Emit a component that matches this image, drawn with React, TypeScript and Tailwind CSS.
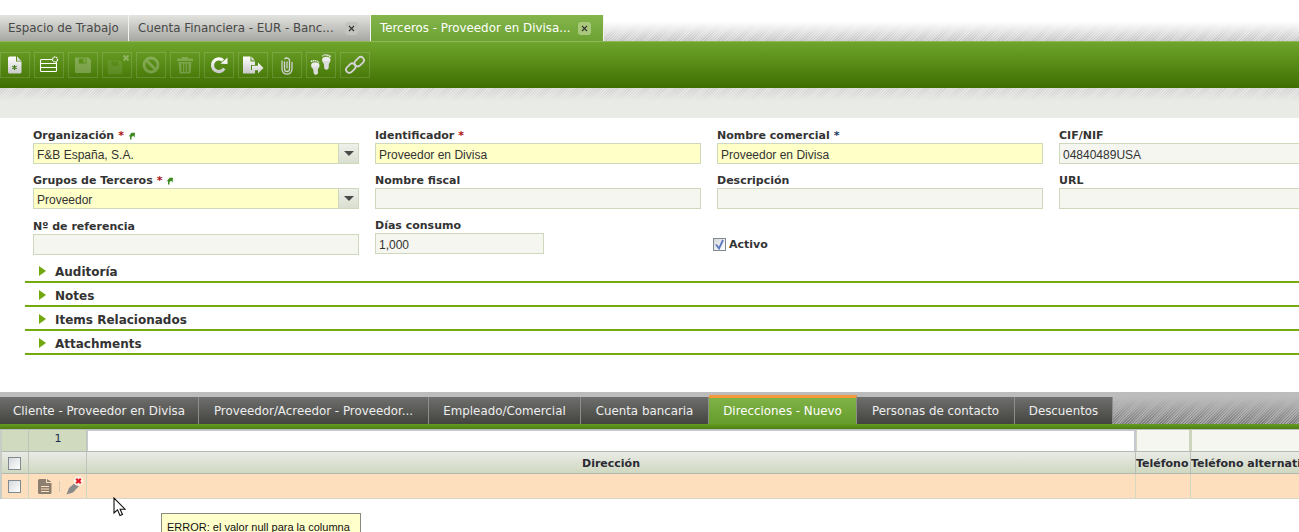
import React from 'react';

const SANS = 'font-["DejaVu_Sans",sans-serif]';
const W = 'url(#iconWhite)';

const IconNew = () => (
  <svg width="20" height="20" viewBox="0 0 20 20">
    <path d="M4.500 1.500H11v5h5.500V17a1.500 1.500 0 0 1-1.500 1.500H4.500A1.500 1.500 0 0 1 3 17V3a1.500 1.500 0 0 1 1.500-1.500z" fill={W} />
    <path d="M12 1.500l4.500 4.500H12z" fill={W} />
    <path d="M9.500 10v5M7.300 11.300l4.400 2.400M11.700 11.300l-4.400 2.400" stroke="#3f7a10" strokeWidth="1.100" />
  </svg>
);

const IconGrid = () => (
  <svg width="20" height="20" viewBox="0 0 20 20" fill="none">
    <rect x="1.500" y="4.500" width="16" height="12" rx="1" stroke="#fff" strokeWidth="1.100" />
    <path d="M1.500 8.500h16M1.500 12.500h16" stroke="#fff" strokeWidth="1.100" />
    <circle cx="16" cy="4.500" r="2.500" fill="#5c8f22" stroke="#fff" strokeWidth="1.300" strokeDasharray="1.400 0.700" />
  </svg>
);

const IconSave = () => (
  <svg width="20" height="20" viewBox="0 0 20 20" opacity="0.24">
    <path fillRule="evenodd" d="M2 2.500h13.500L18 5v11.500a1.500 1.500 0 0 1-1.500 1.500h-13A1.500 1.500 0 0 1 2 16.500zM6 3.500v5h7.500v-5zM10.500 4h2v3.500h-2z" fill="#fff" />
  </svg>
);

const IconSaveClose = () => (
  <svg width="26" height="22" viewBox="0 0 26 22">
    <g transform="translate(2 4) scale(0.9)" opacity="0.09">
      <path fillRule="evenodd" d="M2 2.500h13.500L18 5v11.500a1.500 1.500 0 0 1-1.500 1.500h-13A1.500 1.500 0 0 1 2 16.500zM6 3.500v5h7.500v-5z" fill="#fff" />
    </g>
    <path d="M19.500 1.500l5 5M24.500 1.500l-5 5" stroke="#fff" strokeOpacity="0.3" strokeWidth="2" />
  </svg>
);

const IconNo = () => (
  <svg width="20" height="20" viewBox="0 0 20 20" fill="none" opacity="0.24">
    <circle cx="10" cy="10" r="7" stroke="#fff" strokeWidth="2.800" />
    <path d="M5.500 5.500l9 9" stroke="#fff" strokeWidth="2.800" />
  </svg>
);

const IconTrash = () => (
  <svg width="20" height="20" viewBox="0 0 20 20" opacity="0.22">
    <path fillRule="evenodd" d="M2 3.500h5V2h6v1.500h5V6H2zM3.500 7h13l-1 11.500h-11zM6.500 8.500v8.500h1.500V8.500zM9.300 8.500v8.500h1.400V8.500zM12 8.500v8.500h1.500V8.500z" fill="#fff" />
  </svg>
);

const IconRefresh = () => (
  <svg width="20" height="20" viewBox="0 0 20 20" fill="none">
    <path d="M15.200 13.500A6.300 6.300 0 1 1 14 5.500" stroke={W} strokeWidth="3.200" />
    <path d="M11.500 8.800L18.500 9V2.500z" fill="#f4f4f4" />
  </svg>
);

const IconExport = () => (
  <svg width="24" height="20" viewBox="0 0 24 20">
    <path d="M2 1.500h7.500v5H14v3.500H10v5h4V18.500H2z" fill={W} />
    <path d="M10.500 1.500L14 5.500h-3.500z" fill={W} />
    <path d="M11 10.800h6V7.500l5.500 5.500-5.500 5.500v-3.300h-6z" fill={W} />
  </svg>
);

const IconClip = () => (
  <svg width="20" height="20" viewBox="0 0 20 20" fill="none">
    <path d="M7.500 6.500v7.500a2.500 2.500 0 0 0 5 0V4.800a3.300 3.300 0 0 0-3-1.800 2.800 2.800 0 0 0-2 1" stroke="#d8d8d8" strokeWidth="1.300" />
    <path d="M5 5.500v8.800a5 4.800 0 0 0 10 0V7M10 6.500v7" stroke="#cfcfcf" strokeWidth="1.300" />
  </svg>
);

const IconFeet = () => (
  <svg width="24" height="24" viewBox="0 0 24 24" className="shrink-0">
    <g fill="#ececec">
      <ellipse cx="6.300" cy="12.500" rx="4.200" ry="3.300" />
      <path d="M3 13.500h6.800l-1 3.500.3 3a2.300 2.300 0 0 1-4.400 .3L4.300 17z" fill="#dcdcdc" />
      <circle cx="2.600" cy="8.200" r="1" /><circle cx="4.700" cy="7.700" r=".9" /><circle cx="6.700" cy="7.800" r=".8" /><circle cx="8.400" cy="8.300" r=".7" /><circle cx="9.700" cy="9.200" r=".6" />
      <ellipse cx="17.300" cy="7" rx="4.200" ry="3.300" />
      <path d="M13.500 8h7.500l-1.200 3.500-.1 3.300a2.300 2.300 0 0 1-4.500 .1l-.2-3.400z" fill="#dcdcdc" />
      <circle cx="13.500" cy="2.900" r=".7" /><circle cx="15.100" cy="2.100" r=".8" /><circle cx="17" cy="1.900" r=".8" /><circle cx="18.900" cy="2.300" r=".9" /><circle cx="20.800" cy="3.200" r="1" />
    </g>
  </svg>
);

const IconLink = () => (
  <svg width="22" height="22" viewBox="0 0 22 22" fill="none" stroke="#d4d4d4" strokeWidth="1.800">
    <rect x="1.500" y="11" width="10.500" height="6.500" rx="3.200" transform="rotate(-45 6.700 14.200)" />
    <rect x="10" y="4.500" width="10.500" height="6.500" rx="3.200" transform="rotate(-45 15.200 7.700)" />
  </svg>
);

const toolbar = [
  <IconNew />, <IconGrid />, <IconSave />, <IconSaveClose />, <IconNo />, <IconTrash />,
  <IconRefresh />, <IconExport />, <IconClip />, <IconFeet />, <IconLink />,
];

const CloseBadge = ({ active }: { active?: boolean }) => (
  <span className={`ml-auto w-[13px] h-[13px] rounded-[3px] flex items-center justify-center ${active ? 'bg-[#a9c87c]' : 'bg-[#c3c4bf]'}`}>
    <svg width="7" height="7" viewBox="0 0 7 7"><path d="M1 1l5 5M6 1l-5 5" stroke="#333" strokeWidth="1.100" /></svg>
  </span>
);

const TopTab = ({ text, w, active, close }: { text: string; w: string; active?: boolean; close?: boolean }) => (
  <div className={`${w} h-full shrink-0 flex items-center pt-[1px] ${close ? 'pl-[9px]' : 'pl-[8px]'} pr-[12px] border-r border-[#f2f2f2] text-[11.85px] whitespace-nowrap ${active ? 'text-white bg-[linear-gradient(to_bottom,#84b54c,#6da233)]' : 'text-[#484848] bg-[linear-gradient(to_bottom,#e3e4df,#a6a7a2)]'}`}>
    <span>{text}</span>
    {close && <CloseBadge active={active} />}
  </div>
);

const GreenArrow = () => (
  <svg width="8" height="8" viewBox="0 0 7 8" className="ml-[4px] inline-block">
    <path d="M1.500 7.500V4L0 4.800 3 .8h3.500l-.5 5-1.300-2L3 5v2.500z" fill="#3c8a1e" />
  </svg>
);

const Field = ({ label, star, arrow, value, req, combo, width, dark }: {
  label: string; star?: boolean; arrow?: boolean; value?: string; req?: boolean; combo?: boolean; width?: string; dark?: boolean;
}) => (
  <div>
    <div className="h-[16px] pt-[2px] flex items-center text-[11px] font-bold text-[#333] whitespace-nowrap">
      {label}
      {star && <span className={`ml-[4px] ${dark ? 'text-[#1d3b5c]' : 'text-[#a11]'}`}>*</span>}
      {arrow && <GreenArrow />}
    </div>
    <div className={`${width ?? 'w-full'} h-[21px] flex border border-[#cdd8bd] ${req ? 'bg-[#ffffc8]' : 'bg-[#f4f6ef]'}`}>
      <input readOnly value={value ?? ''} className='flex-1 min-w-0 px-[3px] pt-[2px] bg-transparent outline-none text-[12px] text-[#333] font-["Liberation_Sans",sans-serif]' />
      {combo && (
        <span className="w-[20px] h-full border-l border-[#cdd8bd] bg-[linear-gradient(to_bottom,#eef0ea,#d9dfd0)] flex items-center justify-center">
          <svg width="10" height="5" viewBox="0 0 10 5"><path d="M0 0h10L5 5z" fill="#4a4a4a" /></svg>
        </span>
      )}
    </div>
  </div>
);

const Section = ({ title }: { title: string }) => (
  <div className="h-[24px] ml-[25px] pt-[3px] border-b-2 border-[#74a80f] flex items-center pl-[14px] text-[12px] font-bold text-[#333]">
    <svg width="7" height="10" viewBox="0 0 7 10" className="mr-[9px] -mt-[2px]"><path d="M0 0l7 5-7 5z" fill="#74a80f" /></svg>
    {title}
  </div>
);

const bottomTabs = [
  { text: 'Cliente - Proveedor en Divisa', w: 'w-[199px]' },
  { text: 'Proveedor/Acreedor - Proveedor...', w: 'w-[230px]' },
  { text: 'Empleado/Comercial', w: 'w-[152px]' },
  { text: 'Cuenta bancaria', w: 'w-[128px]' },
  { text: 'Direcciones - Nuevo', w: 'w-[148px]', active: true },
  { text: 'Personas de contacto', w: 'w-[158px]' },
  { text: 'Descuentos', w: 'w-[98px]' },
];

const Check = ({ checked }: { checked?: boolean }) => (
  <span className="w-[13px] h-[13px] border border-[#808890] bg-[linear-gradient(135deg,#d5d8dc,#ffffff)] flex items-center justify-center shrink-0">
    {checked && <svg width="9" height="11" viewBox="0 0 9 11"><path d="M1 5.500l3 4L8 1" fill="none" stroke="#5a78c0" strokeWidth="1.800" /></svg>}
  </span>
);

const COLS = 'grid grid-cols-[27px_58px_1049px_55px_1fr]';

export default function App() {
  return (
    <div className={`relative h-[532px] overflow-hidden bg-white ${SANS}`}>
      <svg width="0" height="0" className="absolute">
        <defs>
          <linearGradient id="iconWhite" x1="0" y1="0" x2="0" y2="1">
            <stop offset="0" stopColor="#ffffff" />
            <stop offset="1" stopColor="#c9c9c9" />
          </linearGradient>
        </defs>
      </svg>

      {/* top tabs */}
      <div className="pt-[15px]">
        <div className="h-[26px] flex bg-[linear-gradient(to_bottom,#ffffff_25%,transparent),repeating-linear-gradient(135deg,#c4c4c4_0_1px,#d8d8d8_1px_2px)]">
          <TopTab text="Espacio de Trabajo" w="w-[129px]" />
          <TopTab text="Cuenta Financiera - EUR - Banc..." w="w-[242px]" close />
          <TopTab text="Terceros - Proveedor en Divisa..." w="w-[233px]" active close />
        </div>
      </div>

      {/* toolbar */}
      <div className="h-[47px] pt-[10px] flex gap-[4px] border-t border-[#8fb85a] bg-[linear-gradient(to_bottom,#6fa52c,#3e6e00)]">
        {toolbar.map((icon, i) => (
          <div key={i} className="w-[30px] h-[26px] shrink-0 flex items-center justify-center border border-white/15">
            {icon}
          </div>
        ))}
      </div>

      <div className="h-[30px] bg-[linear-gradient(to_bottom,transparent,#e8ebe6_45%),repeating-linear-gradient(135deg,#d2d2d2_0_1px,#e4e4e4_1px_2px)]" />

      {/* form */}
      <div className="pt-[9px] pl-[33px] grid grid-cols-[326px_326px_326px_326px] gap-x-[16px] gap-y-[8px]">
        <Field label="Organización" star arrow value="F&B España, S.A." req combo />
        <Field label="Identificador" star value="Proveedor en Divisa" req />
        <Field label="Nombre comercial" star dark value="Proveedor en Divisa" req />
        <Field label="CIF/NIF" value="04840489USA" />
        <Field label="Grupos de Terceros" star arrow value="Proveedor" req combo />
        <Field label="Nombre fiscal" />
        <Field label="Descripción" />
        <Field label="URL" />
        <div className="mt-[1px]"><Field label="Nº de referencia" /></div>
        <Field label="Días consumo" value="1,000" width="w-[169px]" />
        <div className="pt-[21px] -ml-[4px] flex items-start gap-[3px] text-[11px] font-bold text-[#333]">
          <Check checked />
          <span className="leading-[13px]">Activo</span>
        </div>
      </div>

      {/* collapsed sections */}
      <div className="mt-[4px]">
        <Section title="Auditoría" />
        <Section title="Notes" />
        <Section title="Items Relacionados" />
        <Section title="Attachments" />
      </div>

      {/* detail tabs */}
      <div className="mt-[37px] pt-[5px] h-[32px] flex bg-[linear-gradient(to_bottom,#bcbcbc_15%,transparent),repeating-linear-gradient(135deg,#7c7c7c_0_1px,#a5a5a5_1px_2px)]">
        {bottomTabs.map(t => (
          <div
            key={t.text}
            className={`${t.w} shrink-0 flex items-center justify-center pt-[2px] text-[11.85px] whitespace-nowrap border-r border-[#8d8d8a] ${t.active ? '-mt-[2px] text-white border-t-[3px] border-t-[#f59a3c] bg-[linear-gradient(to_bottom,#7fb247,#659c2c)]' : 'text-[#eeeeee] bg-[linear-gradient(to_bottom,#6f706d,#434440)]'}`}
          >
            {t.text}
          </div>
        ))}
      </div>
      <div className="h-[5px] bg-[linear-gradient(to_bottom,#659c21,#4d7f13)]" />
      <div className="h-px bg-[#bdbdbd]" />

      {/* grid */}
      <div className="border-l-2 border-[#c8ccc6]">
        <div className={`${COLS} h-[21px]`}>
          <div className="bg-[#d0dabf] border-r border-[#bfc6b5]" />
          <div className="bg-[#d0dabf] border-r border-[#bfc6b5] flex items-center justify-center text-[11px] text-[#1b2a4a] pb-[3px] pl-[1px]">1</div>
          <div className="bg-white border-r-2 border-l border-t border-[#c6c9d0]" />
          <div className="bg-[#f4f6ef] border-x border-[#cdd5bf] border-r-2" />
          <div className="bg-[#f4f6ef] border-l border-[#cdd5bf]" />
        </div>
        <div className={`${COLS} h-[23px] border-y border-[#b3b8b4] bg-[linear-gradient(to_bottom,#e9ebe6,#cfd8c0)] text-[11px] font-bold text-[#2a2a33]`}>
          <div className="border-r border-[#c0c4bc] flex items-center justify-center pt-[1px] pr-[1px]"><Check /></div>
          <div className="border-r border-[#c0c4bc]" />
          <div className="border-r border-[#b8bcb5] flex items-center justify-center pt-[3px]">Dirección</div>
          <div className="border-r border-[#b8bcb5] pt-[3px] flex items-center overflow-hidden whitespace-nowrap">Teléfono</div>
          <div className="pt-[3px] flex items-center overflow-hidden whitespace-nowrap">Teléfono alternativo</div>
        </div>
        <div className={`${COLS} h-[25px] border-b border-[#d8d4c8] bg-[#fddfbd]`}>
          <div className="border-r border-[#cfd5c0] flex items-center justify-center pt-[1px] pr-[1px]"><Check /></div>
          <div className="border-r border-[#cfd5c0] flex items-center pl-[9px]">
            <svg width="14" height="15" viewBox="0 0 14 15"><path fillRule="evenodd" d="M1.500 0H8v4h5.500v9.500A1.500 1.500 0 0 1 12 15H1.500A1.500 1.500 0 0 1 0 13.500V1.500A1.500 1.500 0 0 1 1.500 0zM3 7v1h8V7zM3 9.500v1h8v-1zM3 12v1h8v-1z" fill="#8d7f6f" /><path d="M9 0l4.500 3H9z" fill="#8d7f6f" /></svg>
            <span className="w-px h-[11px] bg-[#d6c9b3] ml-[7px]" />
            <svg width="18" height="19" viewBox="0 0 18 19" className="ml-[6px] -mt-[2px]">
              <path d="M.5 18.500l2.500-6.500 7-6 3.500 3.500-6.500 7z" fill="#8a8a88" />
              <circle cx="12.500" cy="5" r="5" fill="#fdf2e4" />
              <path d="M10.200 2.700l4.600 4.600M14.800 2.700l-4.600 4.600" stroke="#e11a2b" strokeWidth="2.200" />
            </svg>
          </div>
          <div className="border-r border-[#d8d8c0]" />
          <div className="border-r border-[#cfd5c0]" />
          <div />
        </div>
      </div>

      {/* mouse pointer */}
      <svg width="14" height="21" viewBox="0 0 14 21" className="absolute left-[113px] top-[497px]">
        <path d="M1 1v15l3.500-3.200L7 18.500l2.500-1-2.400-5.300H12z" fill="#fff" stroke="#111" strokeWidth="1.100" />
      </svg>

      {/* error tooltip */}
      <div className='absolute left-[161px] top-[513px] w-[200px] h-[40px] border border-[#8a8a80] bg-[#ffffcc] pl-[5px] pt-[6px] text-[11px] leading-[14px] text-[#111] font-["Liberation_Sans",sans-serif]'>
        ERROR: el valor null para la columna
      </div>
    </div>
  );
}
